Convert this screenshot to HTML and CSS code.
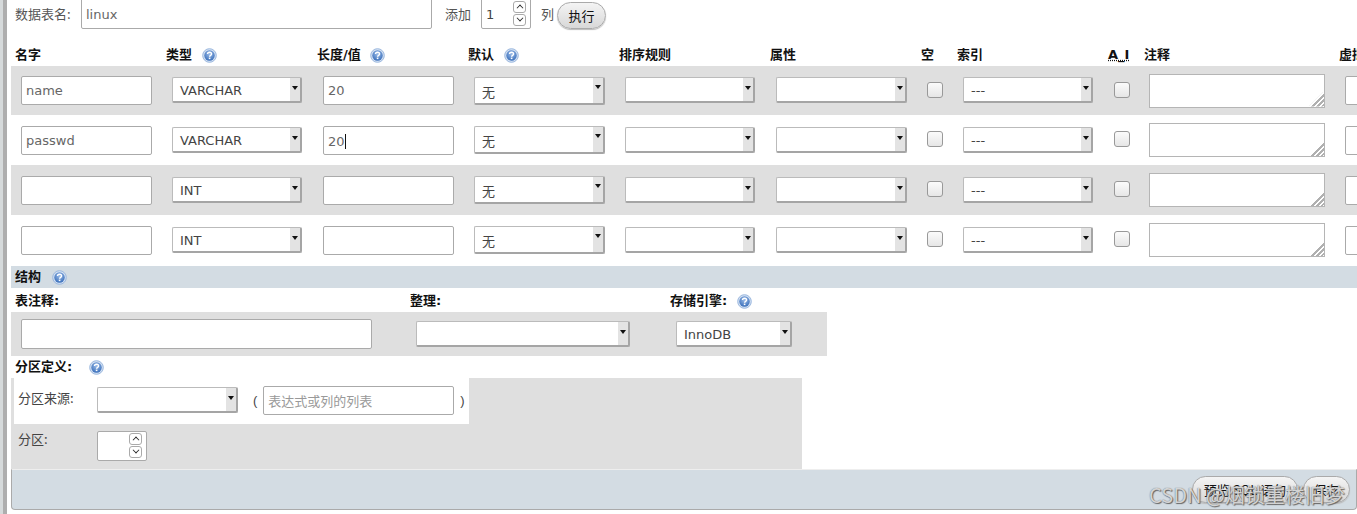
FILE: index.html
```html
<!DOCTYPE html>
<html lang="zh-CN">
<head>
<meta charset="utf-8">
<title>phpMyAdmin</title>
<link rel="stylesheet" href="styles.css">
</head>
<body>
<svg class="defs" width="0" height="0" aria-hidden="true">
  <defs>
    <radialGradient id="helpfill" cx="50%" cy="35%" r="65%">
      <stop offset="0" stop-color="#9dbde8"/>
      <stop offset="1" stop-color="#3a6fbb"/>
    </radialGradient>
    <symbol id="help" viewBox="0 0 15 15">
      <circle cx="7.5" cy="7.5" r="6.8" fill="#d3e0f2" stroke="#9ab7de" stroke-width="1"/>
      <circle cx="7.5" cy="7.5" r="5.2" fill="url(#helpfill)"/>
      <path d="M5.5 6.1c0-1.3 1-1.9 2.1-1.9s2 .7 2 1.8c0 1.4-2 1.4-2 2.8" fill="none" stroke="#fff" stroke-width="1.4"/>
      <rect x="6.8" y="9.6" width="1.6" height="1.5" fill="#fff"/>
    </symbol>
  </defs>
</svg>
<main class="page">
  <div class="topbar">
    <span class="lbl name-lbl">数据表名:</span>
    <input class="field table-name" value="linux">
    <span class="lbl add-lbl">添加</span>
    <div class="spin add-spin"><span class="spin-val">1</span><span class="spin-btns"><i class="up"></i><i class="down"></i></span></div>
    <span class="lbl col-lbl">列</span>
    <button class="btn run">执行</button>
  </div>

  <div class="grid heads">
    <b>名字</b>
    <b>类型 <svg class="hi"><use href="#help"/></svg></b>
    <b>长度/值 <svg class="hi"><use href="#help"/></svg></b>
    <b>默认 <svg class="hi"><use href="#help"/></svg></b>
    <b>排序规则</b>
    <b>属性</b>
    <b>空</b>
    <b>索引</b>
    <b class="ai">A_I</b>
    <b>注释</b>
    <b>虚拟</b>
  </div>

  <div class="grid row first shade">
    <div class="c"><input class="field w131" value="name"></div>
    <div class="c"><div class="sel w130"><span>VARCHAR</span></div></div>
    <div class="c"><input class="field w131" value="20"></div>
    <div class="c"><div class="sel tall w131"><span class="cjk">无</span></div></div>
    <div class="c"><div class="sel w130"></div></div>
    <div class="c"><div class="sel w131"></div></div>
    <div class="c"><i class="cb"></i></div>
    <div class="c"><div class="sel w130"><span>---</span></div></div>
    <div class="c"><i class="cb"></i></div>
    <div class="c ta-c"><div class="ta"></div></div>
    <div class="c"><input class="field w131"></div>
  </div>
  <div class="grid row">
    <div class="c"><input class="field w131" value="passwd"></div>
    <div class="c"><div class="sel w130"><span>VARCHAR</span></div></div>
    <div class="c"><div class="field w131 caret-field">20<i class="caret"></i></div></div>
    <div class="c"><div class="sel tall w131"><span class="cjk">无</span></div></div>
    <div class="c"><div class="sel w130"></div></div>
    <div class="c"><div class="sel w131"></div></div>
    <div class="c"><i class="cb"></i></div>
    <div class="c"><div class="sel w130"><span>---</span></div></div>
    <div class="c"><i class="cb"></i></div>
    <div class="c ta-c"><div class="ta"></div></div>
    <div class="c"><input class="field w131"></div>
  </div>
  <div class="grid row shade">
    <div class="c"><input class="field w131"></div>
    <div class="c"><div class="sel w130"><span>INT</span></div></div>
    <div class="c"><input class="field w131"></div>
    <div class="c"><div class="sel tall w131"><span class="cjk">无</span></div></div>
    <div class="c"><div class="sel w130"></div></div>
    <div class="c"><div class="sel w131"></div></div>
    <div class="c"><i class="cb"></i></div>
    <div class="c"><div class="sel w130"><span>---</span></div></div>
    <div class="c"><i class="cb"></i></div>
    <div class="c ta-c"><div class="ta"></div></div>
    <div class="c"><input class="field w131"></div>
  </div>
  <div class="grid row">
    <div class="c"><input class="field w131"></div>
    <div class="c"><div class="sel w130"><span>INT</span></div></div>
    <div class="c"><input class="field w131"></div>
    <div class="c"><div class="sel tall w131"><span class="cjk">无</span></div></div>
    <div class="c"><div class="sel w130"></div></div>
    <div class="c"><div class="sel w131"></div></div>
    <div class="c"><i class="cb"></i></div>
    <div class="c"><div class="sel w130"><span>---</span></div></div>
    <div class="c"><i class="cb"></i></div>
    <div class="c ta-c"><div class="ta"></div></div>
    <div class="c"><input class="field w131"></div>
  </div>

  <h2 class="band">结构 <svg class="hi"><use href="#help"/></svg></h2>

  <div class="opts">
    <div class="opts-heads">
      <b class="oc1">表注释:</b>
      <b class="oc2">整理:</b>
      <b class="oc3">存储引擎: <svg class="hi"><use href="#help"/></svg></b>
    </div>
    <div class="opts-row">
      <input class="field o-comment">
      <div class="sel o-coll"></div>
      <div class="sel o-eng"><span>InnoDB</span></div>
    </div>
  </div>

  <b class="part-title">分区定义: <svg class="hi"><use href="#help"/></svg></b>
  <div class="part">
    <div class="part-top">
      <span class="p-lbl p-lbl-top">分区来源:</span>
      <div class="sel p-sel"></div>
      <span class="paren lp">(</span>
      <div class="field p-expr">表达式或列的列表</div>
      <span class="paren rp">)</span>
    </div>
    <div class="part-count">
      <span class="p-lbl p-lbl-count">分区:</span>
      <div class="spin p-spin"><span class="spin-val"></span><span class="spin-btns"><i class="up"></i><i class="down"></i></span></div>
    </div>
  </div>

  <div class="foot">
    <button class="btn preview">预览 SQL 语句</button>
    <button class="btn save">保存</button>
  </div>
  <div class="mark">CSDN @烟锁重楼旧梦</div>
</main>
</body>
</html>
```
FILE: styles.css
```css
* { box-sizing: border-box; }
html, body { margin: 0; height: 514px; width: 1357px; overflow: hidden; background: #fff; }
body {
  font-family: "Liberation Sans", "DejaVu Sans", "Noto Sans CJK SC", sans-serif;
  font-size: 13px;
  color: #444;
}
.defs { position: absolute; }
.page {
  position: relative;
  height: 514px;
  width: 1357px;
  padding-left: 11px;
  background:
    linear-gradient(#aeaeae, #aeaeae) 3px 0 / 4px 100% no-repeat,
    linear-gradient(#d6dadb, #d6dadb) 0 0 / 3px 100% no-repeat,
    #fff;
}
b { font-weight: 700; color: #111; font-size: 13px; white-space: nowrap; font-family: "DejaVu Sans", "Noto Sans CJK SC", sans-serif; }
.hi { width: 15px; height: 15px; vertical-align: -4px; margin-left: 5px; }

.field {
  display: block;
  height: 29px;
  padding: 0 4px;
  border: 1px solid #aaa;
  border-radius: 2px;
  background: #fff;
  font: 13px/27px "DejaVu Sans", "Noto Sans CJK SC", sans-serif;
  color: #666;
  outline: 0;
}
.w131 { width: 131px; }
.w130 { width: 130px; }

.sel {
  position: relative;
  height: 26px;
  margin-bottom: 1px;
  padding-left: 7px;
  border: 1px solid #bbb;
  border-right: 2px solid #a5a5a5;
  border-bottom: 2px solid #a5a5a5;
  border-radius: 2px;
  background: linear-gradient(#e3e3e3, #e3e3e3) right / 10px 100% no-repeat #fff;
  font: 13px/25px "DejaVu Sans", "Noto Sans CJK SC", sans-serif;
  color: #444;
}
.sel::after {
  content: "";
  position: absolute;
  right: 2px;
  top: 8px;
  border: 3px solid transparent;
  border-top: 4px solid #111;
  border-bottom: 0;
}
.tall { height: 28px; margin-bottom: 0; }
.tall::after { top: 7px; }
.cjk { line-height: 27px; font-size: 13px; font-family: "Noto Sans CJK SC", sans-serif; }

.topbar { position: relative; height: 44px; display: flex; align-items: flex-start; }
.lbl { font-size: 13px; line-height: 16px; color: #555; font-family: "Noto Sans CJK SC", sans-serif; }
.name-lbl { margin: 6px 0 0 4px; width: 66px; }
.table-name { width: 351px; height: 40px; margin-top: -11px; padding-top: 11px; }
.add-lbl { margin: 6px 0 0 13px; width: 36px; }
.add-spin { width: 50px; height: 40px; margin-top: -11px; padding-top: 11px; }
.col-lbl { margin: 6px 0 0 10px; width: 16px; }
.run { margin-top: 2px; width: 49px; height: 27px; padding-bottom: 2px; }

.btn {
  border: 1px solid #aaa;
  border-radius: 14px;
  background: linear-gradient(#f4f4f4, #d8d8d8);
  box-shadow: 0 1px 1px #bbb;
  font: 13px/1 "Noto Sans CJK SC", sans-serif;
  color: #111;
  padding: 0;
}

.spin {
  position: relative;
  border: 1px solid #aaa;
  border-radius: 2px;
  background: #fff;
}
.spin-val { display: block; padding-left: 4px; font: 13px/28px "DejaVu Sans", sans-serif; color: #444; }
.spin-btns { position: absolute; right: 4px; bottom: 1px; width: 13px; display: flex; flex-direction: column; }
.spin-btns i {
  display: block;
  height: 12px;
  margin-bottom: 1px;
  border: 1px solid #aaa;
  border-radius: 3px;
  position: relative;
  background: #fff;
}
.spin-btns i::after {
  content: "";
  position: absolute;
  left: 3px;
  top: 3px;
  width: 5px;
  height: 5px;
  border-left: 1.5px solid #222;
  border-top: 1.5px solid #222;
  transform: rotate(45deg) scale(.8);
}
.spin-btns .down::after { top: 0; transform: rotate(225deg) scale(.8); }

.grid {
  display: grid;
  grid-template-columns: repeat(6, 151px) 36px 151px 36px 195px 60px;
  width: 1346px;
  overflow: hidden;
}
.heads { height: 22px; align-items: start; padding-top: 1px; }
.heads b { padding-left: 4px; line-height: 20px; }
.ai { text-decoration: underline dotted; }
.row { height: 50px; align-items: center; }
.first { height: 49px; }
.shade { background: #dfdfdf; }
.c { padding-left: 10px; }
.ta-c { padding-left: 9px; }
.cb {
  display: block;
  width: 16px;
  height: 16px;
  margin-bottom: 2px;
  border: 1px solid #999;
  border-radius: 3px;
  background: linear-gradient(#fbfbfb, #e6e6e6);
}
.ta {
  position: relative;
  width: 176px;
  height: 34px;
  border: 1px solid #b5b5b5;
  background: #fff;
}
.ta::after {
  content: "";
  position: absolute;
  right: 0;
  bottom: 0;
  width: 15px;
  height: 15px;
  background: repeating-linear-gradient(135deg, #fff 0 1.6px, #b0b0b0 1.6px 3.4px);
  clip-path: polygon(100% 0, 100% 100%, 0 100%);
}
.caret-field { position: relative; line-height: 29px; }
.caret { display: inline-block; width: 1px; height: 15px; background: #111; vertical-align: -3px; }

.band {
  height: 22px;
  margin: 1px 0 0;
  padding-left: 4px;
  background: #d3dce3;
  font: 700 13px/21px "DejaVu Sans", "Noto Sans CJK SC", sans-serif;
  color: #111;
}
.band .hi { margin-left: 6px; }
.opts { width: 816px; }
.opts-heads { display: flex; height: 24px; align-items: center; padding: 0 0 2px 4px; }
.oc1 { width: 395px; }
.oc2 { width: 260px; }
.opts-row { display: flex; align-items: center; height: 44px; padding-left: 10px; background: #dfdfdf; }
.o-comment { width: 351px; height: 30px; }
.o-coll { width: 214px; margin-left: 44px; }
.o-eng { width: 116px; margin-left: 46px; }

.part-title { display: block; height: 22px; padding-left: 4px; line-height: 22px; }
.part-title .hi { margin-left: 12px; }
.part { width: 791px; height: 91px; background: #dfdfdf; padding-left: 3px; }
.part-top { display: flex; align-items: center; width: 455px; height: 46px; padding-bottom: 1px; background: #fff; }
.p-lbl { width: 83px; padding-left: 4px; font: 13px/20px "Noto Sans CJK SC", sans-serif; color: #444; }
.p-lbl-top { margin-bottom: 6px; }
.p-lbl-count { margin-bottom: 15px; }
.p-sel { width: 141px; }
.paren { font-size: 13px; color: #444; }
.lp { margin: 0 6px 0 15px; }
.p-expr { width: 191px; height: 29px; font: 13px/27px "Noto Sans CJK SC", sans-serif; color: #999; }
.rp { margin-left: 6px; }
.part-count { display: flex; align-items: center; height: 45px; }
.p-spin { width: 50px; height: 30px; margin-bottom: 1px; }
.p-spin .spin-val { height: 28px; }

.foot {
  display: flex;
  justify-content: flex-end;
  align-items: flex-end;
  gap: 5px;
  height: 41px;
  padding: 0 6px 6px 0;
  background: #d3dce3;
  border-top: 1px solid #eee;
  border-left: 1px solid #aaa;
  border-bottom: 1px solid #aaa;
  border-right: 1px solid #aaa;
  border-radius: 0 0 4px 4px;
}
.preview { width: 106px; height: 27px; }
.save { width: 47px; height: 27px; }

.mark {
  position: absolute;
  left: 1149px;
  top: 482px;
  font: 20px/26px "Noto Sans CJK SC", sans-serif;
  color: rgba(255, 255, 255, .72);
  text-shadow: 1px 1px 1px #666, 0 0 1px #555;
  white-space: nowrap;
}
```
